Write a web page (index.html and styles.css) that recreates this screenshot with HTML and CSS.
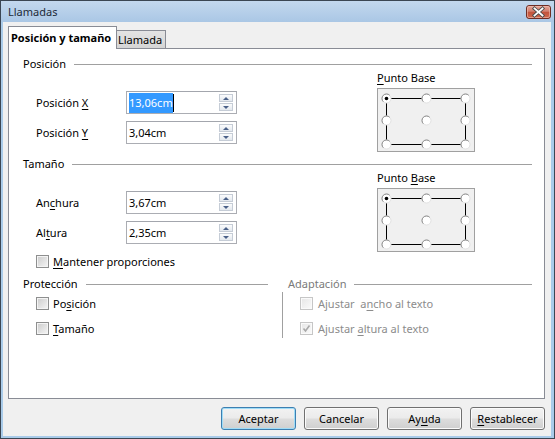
FILE: index.html
```html
<!DOCTYPE html>
<html lang="es">
<head>
<meta charset="utf-8">
<title>Llamadas</title>
<link rel="stylesheet" href="styles.css">
</head>
<body>
<div class="window">
  <div class="titlebar">
    <span class="title">Llamadas</span>
    <span class="close">
      <svg width="25" height="14" viewBox="0 0 25 14">
        <defs>
          <linearGradient id="cg" x1="0" y1="0" x2="0" y2="1">
            <stop offset="0" stop-color="#e7a89b"/>
            <stop offset="0.45" stop-color="#d2806f"/>
            <stop offset="0.5" stop-color="#c2533c"/>
            <stop offset="1" stop-color="#d06a4e"/>
          </linearGradient>
        </defs>
        <rect x="0.5" y="0.5" width="24" height="13" rx="2.5" fill="url(#cg)" stroke="#6e2d24"/>
        <rect x="1.5" y="1.5" width="22" height="11" rx="1.5" fill="none" stroke="#f1c2b6" stroke-opacity="0.6"/>
        <path d="M8.5 3.5 L16.5 10.5 M16.5 3.5 L8.5 10.5" stroke="#4a4a4a" stroke-width="3.6" stroke-linecap="square"/>
        <path d="M8.5 3.5 L16.5 10.5 M16.5 3.5 L8.5 10.5" stroke="#ffffff" stroke-width="1.8" stroke-linecap="square"/>
      </svg>
    </span>
  </div>
  <div class="client">
    <div class="tabs">
      <div class="tab active">Posición y tamaño</div>
      <div class="tab">Llamada</div>
    </div>
    <div class="panel">
      <section class="group g1">
        <div class="ghead"><span>Posición</span><i class="rule"></i></div>
        <div class="gbody">
          <div class="fields">
            <div class="frow">
              <span class="flabel">Posición <u>X</u></span>
              <div class="field"><span class="val"><span class="sel">13,06cm</span><span class="caret"></span></span><span class="spin"><b class="up"></b><b class="down"></b></span></div>
            </div>
            <div class="frow">
              <span class="flabel">Posición <u>Y</u></span>
              <div class="field"><span class="val">3,04cm</span><span class="spin"><b class="up"></b><b class="down"></b></span></div>
            </div>
          </div>
          <div class="base">
            <div class="blabel"><u>P</u>unto Base</div>
            <div class="bbox">
              <svg width="96" height="62" viewBox="0 0 96 62">
                <rect x="8.5" y="9.5" width="79" height="46" fill="none" stroke="#000"/>
                <g class="radios">
                  <circle cx="8.5" cy="9.5" r="4.5"/><circle cx="48.5" cy="9.5" r="4.5"/><circle cx="87.5" cy="9.5" r="4.5"/>
                  <circle cx="8.5" cy="31.5" r="4.5"/><circle cx="48.5" cy="31.5" r="4.5"/><circle cx="87.5" cy="31.5" r="4.5"/>
                  <circle cx="8.5" cy="55.5" r="4.5"/><circle cx="48.5" cy="55.5" r="4.5"/><circle cx="87.5" cy="55.5" r="4.5"/>
                </g>
                <g class="arcs">
                  <path d="M11.7 6.3 A4.5 4.5 0 0 0 5.3 12.7"/><path d="M51.7 6.3 A4.5 4.5 0 0 0 45.3 12.7"/><path d="M90.7 6.3 A4.5 4.5 0 0 0 84.3 12.7"/>
                  <path d="M11.7 28.3 A4.5 4.5 0 0 0 5.3 34.7"/><path d="M51.7 28.3 A4.5 4.5 0 0 0 45.3 34.7"/><path d="M90.7 28.3 A4.5 4.5 0 0 0 84.3 34.7"/>
                  <path d="M11.7 52.3 A4.5 4.5 0 0 0 5.3 58.7"/><path d="M51.7 52.3 A4.5 4.5 0 0 0 45.3 58.7"/><path d="M90.7 52.3 A4.5 4.5 0 0 0 84.3 58.7"/>
                </g>
                <circle cx="8.5" cy="9.5" r="1.8" fill="#000"/>
              </svg>
            </div>
          </div>
        </div>
      </section>

      <section class="group g2">
        <div class="ghead"><span>Tamaño</span><i class="rule"></i></div>
        <div class="gbody">
          <div class="fields">
            <div class="frow">
              <span class="flabel">An<u>c</u>hura</span>
              <div class="field"><span class="val">3,67cm</span><span class="spin"><b class="up"></b><b class="down"></b></span></div>
            </div>
            <div class="frow">
              <span class="flabel">Al<u>t</u>ura</span>
              <div class="field"><span class="val">2,35cm</span><span class="spin"><b class="up"></b><b class="down"></b></span></div>
            </div>
            <div class="crow keep"><span class="cb"></span><span><u>M</u>antener proporciones</span></div>
          </div>
          <div class="base">
            <div class="blabel">Punto <u>B</u>ase</div>
            <div class="bbox">
              <svg width="96" height="62" viewBox="0 0 96 62">
                <rect x="8.5" y="9.5" width="79" height="46" fill="none" stroke="#000"/>
                <g class="radios">
                  <circle cx="8.5" cy="9.5" r="4.5"/><circle cx="48.5" cy="9.5" r="4.5"/><circle cx="87.5" cy="9.5" r="4.5"/>
                  <circle cx="8.5" cy="31.5" r="4.5"/><circle cx="48.5" cy="31.5" r="4.5"/><circle cx="87.5" cy="31.5" r="4.5"/>
                  <circle cx="8.5" cy="55.5" r="4.5"/><circle cx="48.5" cy="55.5" r="4.5"/><circle cx="87.5" cy="55.5" r="4.5"/>
                </g>
                <g class="arcs">
                  <path d="M11.7 6.3 A4.5 4.5 0 0 0 5.3 12.7"/><path d="M51.7 6.3 A4.5 4.5 0 0 0 45.3 12.7"/><path d="M90.7 6.3 A4.5 4.5 0 0 0 84.3 12.7"/>
                  <path d="M11.7 28.3 A4.5 4.5 0 0 0 5.3 34.7"/><path d="M51.7 28.3 A4.5 4.5 0 0 0 45.3 34.7"/><path d="M90.7 28.3 A4.5 4.5 0 0 0 84.3 34.7"/>
                  <path d="M11.7 52.3 A4.5 4.5 0 0 0 5.3 58.7"/><path d="M51.7 52.3 A4.5 4.5 0 0 0 45.3 58.7"/><path d="M90.7 52.3 A4.5 4.5 0 0 0 84.3 58.7"/>
                </g>
                <circle cx="8.5" cy="9.5" r="1.8" fill="#000"/>
              </svg>
            </div>
          </div>
        </div>
      </section>

      <div class="g3">
        <section class="prot">
          <div class="ghead"><span>Protección</span><i class="rule"></i></div>
          <div class="pbody">
            <div class="crow"><span class="cb"></span><span>Po<u>s</u>ición</span></div>
            <div class="crow"><span class="cb"></span><span><u>T</u>amaño</span></div>
          </div>
        </section>
        <section class="adapt">
          <div class="ghead"><span>Adaptación</span><i class="rule"></i></div>
          <div class="abody">
            <div class="crow dis"><span class="cb"></span><span>Ajustar&nbsp; a<u>n</u>cho al texto</span></div>
            <div class="crow dis"><span class="cb checked"><svg width="11" height="11" viewBox="0 0 11 11"><path d="M2.5 5.5 L4.5 8 L8.5 2.5" fill="none" stroke="#a9a9a9" stroke-width="1.6"/></svg></span><span>Ajustar <u>a</u>ltura al texto</span></div>
          </div>
        </section>
      </div>
    </div>
    <div class="buttons">
      <div class="btn default">Aceptar</div>
      <div class="btn">Cancelar</div>
      <div class="btn">Ay<u>u</u>da</div>
      <div class="btn"><span><u>R</u>establecer</span></div>
    </div>
  </div>
</div>
</body>
</html>
```

FILE: styles.css
```css
* { box-sizing: border-box; }
html, body { margin: 0; padding: 0; }
body {
  width: 555px;
  height: 439px;
  overflow: hidden;
  background: #ffffff;
  font-family: "Noto Sans", "Liberation Sans", sans-serif;
  font-size: 11px;
  color: #000;
}
u { text-decoration: underline; text-underline-offset: 2px; }

.window {
  width: 555px;
  height: 439px;
  border: 1px solid #3b4653;
  background: #a9cbe9;
  display: flex;
  flex-direction: column;
}
.titlebar {
  height: 21px;
  flex: none;
  display: flex;
  align-items: flex-start;
  padding: 0 3px 0 7px;
  background: linear-gradient(#c3d8ee, #aac7e5);
}
.title {
  font-size: 11px;
  line-height: 22px;
  color: #1e2a38;
}
.close {
  margin-left: auto;
  margin-top: 4px;
  display: flex;
}

.client {
  flex: 1;
  margin: 0 3px 2px 2px;
  background: #f0f0f0;
  padding: 4px 6px 0 5px;
  display: flex;
  flex-direction: column;
}

/* tabs */
.tabs {
  display: flex;
  align-items: flex-end;
  height: 22px;
  flex: none;
}
.tab {
  width: 49px;
  height: 18px;
  border: 1px solid #898c95;
  border-left: none;
  border-bottom: none;
  background: linear-gradient(#e4e4e4, #d5d5d5);
  padding-left: 1px;
  line-height: 18px;
  white-space: nowrap;
}
.tab.active {
  width: 109px;
  height: 23px;
  margin-bottom: -1px;
  border-left: 1px solid #898c95;
  background: #ffffff;
  font-weight: bold;
  padding-left: 2px;
  line-height: 22px;
  position: relative;
  z-index: 1;
}

/* panel */
.panel {
  height: 351px;
  flex: none;
  border: 1px solid #898c95;
  background: #ffffff;
  padding: 8px 12px 0 14px;
}
.ghead {
  display: flex;
  align-items: center;
  height: 14px;
  line-height: 14px;
  white-space: nowrap;
}
.ghead .rule {
  flex: 1;
  height: 1px;
  background: #a0a0a0;
  margin-left: 8px;
}
.gbody { display: flex; }
.g1 { margin-bottom: 5px; }
.g2 { margin-bottom: 8px; }
.fields {
  flex: 1;
  padding: 20px 0 0 13px;
}
.frow {
  display: flex;
  align-items: center;
  height: 23px;
}
.frow + .frow { margin-top: 7px; }
.flabel { width: 90px; }
.field {
  width: 111px;
  height: 23px;
  border: 1px solid #abadb3;
  border-top-color: #a3a6ad;
  background: #fff;
  display: flex;
  align-items: center;
  padding: 0 3px 0 2px;
}
.val {
  flex: 1;
  display: flex;
  align-items: center;
  line-height: 20px;
}
.sel {
  background: #3399ff;
  color: #fff;
  line-height: 20px;
}
.caret {
  width: 1px;
  height: 18px;
  background: #000;
}
.spin {
  width: 14px;
  height: 17px;
  display: flex;
  flex-direction: column;
}
.spin b {
  flex: 1;
  border: 1px solid #c5ccd6;
  background: linear-gradient(#fbfcfd, #e3e8ee);
  display: flex;
  align-items: center;
  justify-content: center;
}
.spin b + b { margin-top: 1px; }
.spin b::after {
  content: "";
  width: 0;
  height: 0;
  border-left: 3px solid transparent;
  border-right: 3px solid transparent;
}
.spin .up::after { border-bottom: 3px solid #4a6088; }
.spin .down::after { border-top: 3px solid #4a6088; }

.base {
  width: 98px;
  margin-right: 57px;
}
.blabel {
  height: 14px;
  line-height: 14px;
  white-space: nowrap;
}
.bbox {
  margin-top: 3px;
  width: 98px;
  height: 64px;
  border: 1px solid #a0a0a0;
  background: #f0f0f0;
}
.bbox svg { display: block; }
.radios circle { fill: #ffffff; stroke: #e2e2e2; stroke-width: 1; }
.arcs path { fill: none; stroke: #8a8a8a; stroke-width: 1; }

/* checkboxes */
.crow {
  display: flex;
  align-items: center;
  height: 16px;
  white-space: nowrap;
}
.keep { margin-top: 9px; }
.cb {
  width: 13px;
  height: 13px;
  flex: none;
  margin-right: 4px;
  border: 1px solid #8e8f8f;
  box-shadow: inset 0 0 0 1px #f4f4f4;
  background: linear-gradient(135deg, #cbcbcb, #f6f6f6);
  display: flex;
  align-items: center;
  justify-content: center;
}
.dis { color: #8c8c8c; }
.dis .cb {
  margin-right: 5px;
  border-color: #c6c6c6;
  box-shadow: inset 0 0 0 1px #fafafa;
  background: linear-gradient(135deg, #e6e6e6, #fbfbfb);
}

.g3 { display: flex; }
.prot { width: 245px; }
.pbody { padding: 4px 0 0 13px; }
.pbody .crow + .crow { margin-top: 9px; }
.adapt {
  width: 250px;
  margin-left: 14px;
}
.adapt .ghead { padding-left: 6px; color: #7a7a7a; }
.abody {
  margin-top: 1px;
  height: 46px;
  border-left: 1px solid #a0a0a0;
  padding: 3px 0 0 17px;
}
.abody .crow + .crow { margin-top: 9px; }

/* buttons */
.buttons {
  display: flex;
  justify-content: flex-end;
  gap: 8px;
  margin-top: 8px;
}
.btn {
  width: 75px;
  height: 23px;
  border: 1px solid #707070;
  border-radius: 3px;
  background: linear-gradient(#f2f2f2 0%, #ebebeb 48%, #dddddd 52%, #cfcfcf 100%);
  box-shadow: inset 0 0 0 1px #fbfbfb;
  display: flex;
  align-items: center;
  justify-content: center;
  line-height: 16px;
  white-space: nowrap;
}
.btn.default {
  border-color: #3c7fb1;
  box-shadow: inset 0 0 0 1px #9fdcf7;
}
```
